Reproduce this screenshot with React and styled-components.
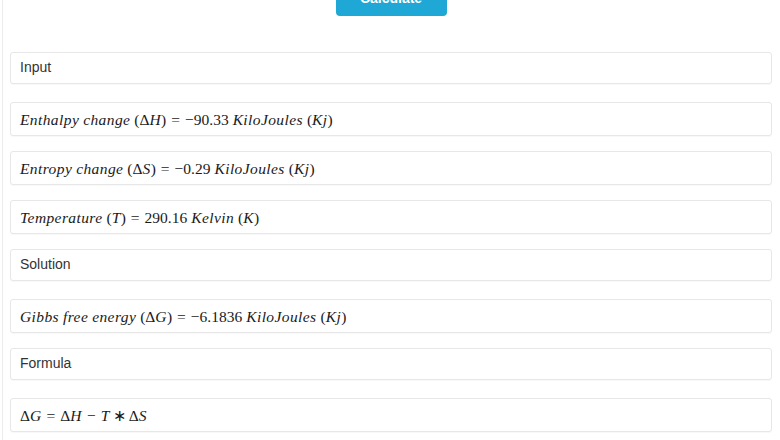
import React from 'react';
import styled, {createGlobalStyle} from "styled-components";

const GlobalStyle = createGlobalStyle`
  body {
    margin: 0;
    background: #fff;
    font-family: "Liberation Sans", Arial, sans-serif;
    color: #333;
  }
`;

const Var = ({children}) => <Italic>{children}</Italic>;

const Quantity = ({label, delta, symbol, sign, value, unit, unitSpace = true}) => (
    <MathLine>
        {label.map((word, i) => (
            <Word key={i}><Var>{word}</Var></Word>
        ))}
        <Up>(</Up>{delta && <Up>Δ</Up>}<Var>{symbol}</Var><Up>)</Up>
        <Op>=</Op>
        {sign && <Up>−</Up>}<Up>{value}</Up>
        <Word lead><Var>{unit.name}</Var></Word>
        {unitSpace ? <Word><Up>(</Up><Var>{unit.sym}</Var><Up>)</Up></Word>
            : <><Up>(</Up><Var>{unit.sym}</Var><Up>)</Up></>}
    </MathLine>
);

const App = () => {
    const kj = {name: "KiloJoules", sym: "Kj"};

    return (
        <Page>
            <GlobalStyle/>
            <ButtonRow>
                <CalcButton>Calculate</CalcButton>
            </ButtonRow>

            <Cards>
                <Card><Heading>Input</Heading></Card>
                <Card math>
                    <Quantity label={["Enthalpy", "change"]} delta symbol="H" sign value="90.33" unit={kj}/>
                </Card>
                <Card math>
                    <Quantity label={["Entropy", "change"]} delta symbol="S" sign value="0.29" unit={kj}/>
                </Card>
                <Card math>
                    <Quantity label={["Temperature"]} symbol="T" value="290.16"
                              unit={{name: "Kelvin", sym: "K"}} unitSpace={false}/>
                </Card>
                <Card><Heading>Solution</Heading></Card>
                <Card math>
                    <Quantity label={["Gibbs", "free", "energy"]} delta symbol="G" sign value="6.1836" unit={kj}/>
                </Card>
                <Card><Heading>Formula</Heading></Card>
                <Card math>
                    <MathLine>
                        <Up>Δ</Up><Var>G</Var>
                        <Op>=</Op>
                        <Up>Δ</Up><Var>H</Var>
                        <Op>−</Op>
                        <Var>T</Var>
                        <Op small>∗</Op>
                        <Up>Δ</Up><Var>S</Var>
                    </MathLine>
                </Card>
            </Cards>
        </Page>
    );
};

export default App;


const Page = styled.div`
  margin-left: 2px;
  border-left: 1px solid #ececec;
  padding: 0 8px 0 7px;
  height: 440px;
  overflow: hidden;
  box-sizing: border-box;
`;

const ButtonRow = styled.div`
  display: flex;
  justify-content: center;
  margin-top: -20px;
`;

const CalcButton = styled.button`
  width: 111px;
  height: 36px;
  border: none;
  border-radius: 4px;
  background: #1fa7d5;
  color: #fff;
  font-family: "Liberation Sans", Arial, sans-serif;
  font-weight: bold;
  font-size: 14px;
  padding: 0;
`;

const Cards = styled.div`
  display: flex;
  flex-direction: column;
  margin-top: 36px;
`;

const Card = styled.div`
  height: ${({math}) => math ? 34 : 32}px;
  margin-bottom: ${({math}) => math ? 15 : 18}px;
  box-sizing: border-box;
  border: 1px solid #e7e7e7;
  border-radius: 3px;
  box-shadow: 0 1px 1px rgba(0, 0, 0, 0.03);
  background: #fff;
  padding: 0 9px;
  display: flex;
  align-items: center;
`;

const Heading = styled.span`
  font-size: 14px;
  color: #333;
  padding-bottom: 2px;
`;

const MathLine = styled.div`
  font-family: "Liberation Serif", "Times New Roman", serif;
  font-size: 15.5px;
  color: #1a1a1a;
  white-space: nowrap;
  display: flex;
  align-items: baseline;
  padding-top: 1px;
`;

const Italic = styled.i`
  font-style: italic;
  letter-spacing: 0.4px;
`;

const Up = styled.span`
  font-style: normal;
`;

const Word = styled.span`
  margin-right: 4px;
  margin-left: ${({lead}) => lead ? 4 : 0}px;
`;

const Op = styled.span`
  margin: 0 ${({small}) => small ? 3 : 5}px;
`;
